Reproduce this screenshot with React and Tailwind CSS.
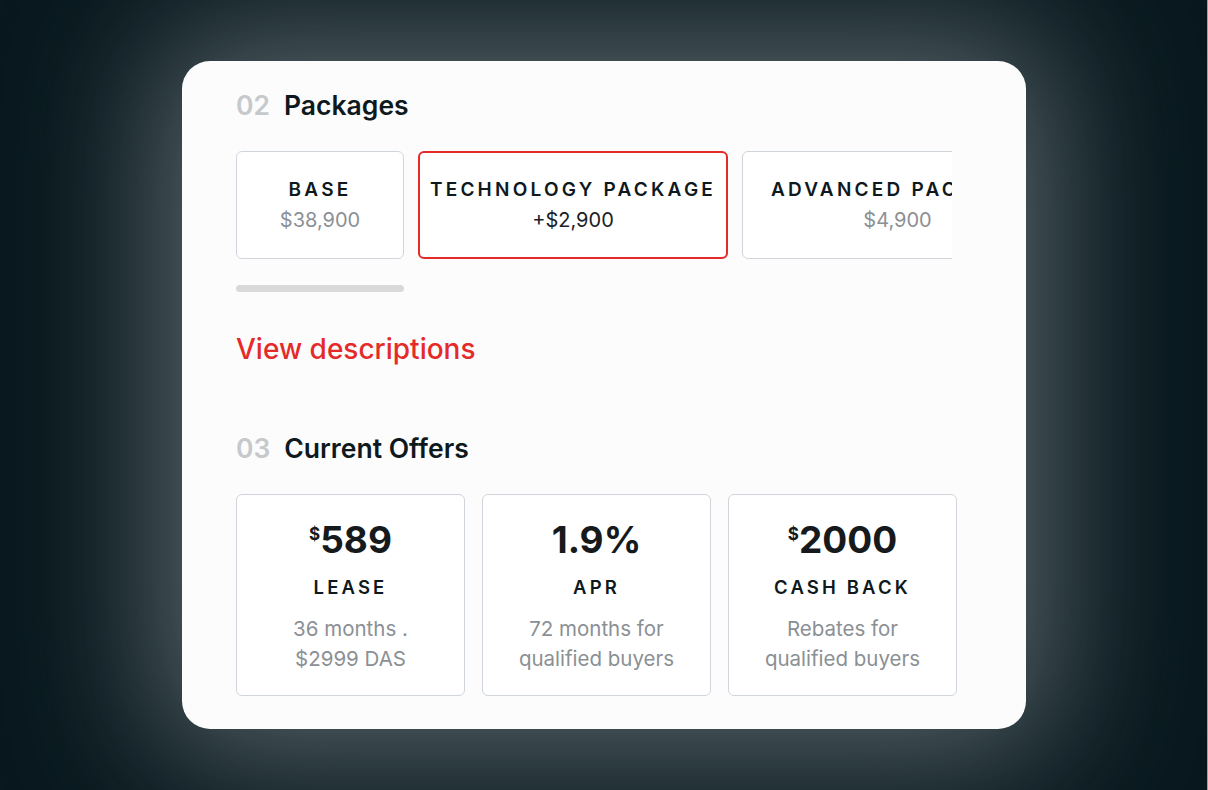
import React from "react";

const packages = [
  { name: "BASE", price: "$38,900", w: "w-[168px]", active: false },
  { name: "TECHNOLOGY PACKAGE", price: "+$2,900", w: "w-[310px]", active: true },
  { name: "ADVANCED PACKAGE", price: "$4,900", w: "w-[311px]", active: false },
];

const offers = [
  { sup: "$", value: "589", label: "LEASE", lines: ["36 months .", "$2999 DAS"] },
  { sup: "", value: "1.9%", label: "APR", lines: ["72 months for", "qualified buyers"] },
  { sup: "$", value: "2000", label: "CASH BACK", lines: ["Rebates for", "qualified buyers"] },
];

function Heading({ num, title }) {
  return (
    <div className="flex items-center gap-[14px] h-[32px] text-[26.5px] font-semibold leading-[32px]">
      <span className="text-[#c6c9cc]">{num}</span>
      <span className="text-[#0e191e]">{title}</span>
    </div>
  );
}

export default function App() {
  return (
    <div
      className="w-[1208px] h-[790px] overflow-hidden bg-[#08181e] border-r border-[#9aa1a4] pt-[61px] pl-[182px]"
      style={{ fontFamily: "Inter, 'Noto Sans', sans-serif" }}
    >
      <div className="w-[844px] h-[668px] rounded-[28px] bg-[#fcfcfc] pt-[28px] pl-[54px] shadow-[0_0_140px_30px_rgba(100,112,116,0.88)]">
        <Heading num="02" title="Packages" />

        <div className="mt-[30px] w-[716px] overflow-hidden">
          <div className="flex gap-[14px]">
            {packages.map((p) => (
              <div
                key={p.name}
                className={`${p.w} shrink-0 h-[108px] rounded-[6px] bg-white flex flex-col items-center pt-[25px] ${
                  p.active ? "border-2 border-[#e52a2a]" : "border border-[#d0d5dc]"
                }`}
              >
                <div className={`whitespace-nowrap text-[19px] font-semibold tracking-[0.17em] text-[#0e191e] leading-[26px] ${p.active ? "-mt-[1px]" : ""}`}>
                  {p.name}
                </div>
                <div className={`mt-[4px] text-[20px] leading-[26px] ${p.active ? "text-[#1a2126]" : "text-[#8b9095]"}`}>
                  {p.price}
                </div>
              </div>
            ))}
          </div>
        </div>

        <div className="mt-[26px] w-[168px] h-[7px] rounded-full bg-[#d9d9d9]" />

        <div className="mt-[40px] text-[28px] leading-[34px] text-[#e52a2a] font-medium">View descriptions</div>

        <div className="mt-[66px]">
          <Heading num="03" title="Current Offers" />
        </div>

        <div className="mt-[30px] flex gap-[17px]">
          {offers.map((o) => (
            <div
              key={o.label}
              className="w-[229px] h-[202px] rounded-[6px] border border-[#d0d5dc] bg-white flex flex-col items-center pt-[23px]"
            >
              <div className="flex items-start text-[#161a1d] font-bold">
                <span className="text-[17px] leading-[24px] mt-[4px]">{o.sup}</span>
                <span className="text-[37px] leading-[44px]">{o.value}</span>
              </div>
              <div className="mt-[13px] text-[18.5px] font-semibold tracking-[0.17em] leading-[24px] text-[#0e191e]">
                {o.label}
              </div>
              <div className="mt-[15px] text-[20.5px] leading-[30px] text-[#8b9095] text-center">
                {o.lines.map((l) => (
                  <div key={l}>{l}</div>
                ))}
              </div>
            </div>
          ))}
        </div>
      </div>
    </div>
  );
}
